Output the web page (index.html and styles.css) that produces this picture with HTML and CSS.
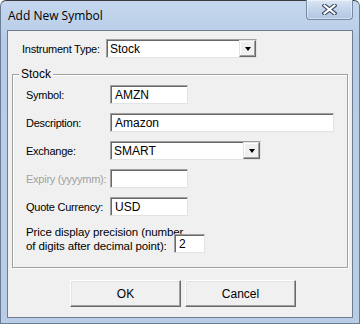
FILE: index.html
```html
<!DOCTYPE html>
<html lang="en">
<head>
  <meta charset="UTF-8">
  <meta name="viewport" content="width=device-width, initial-scale=1.0">
  <title>Add New Symbol</title>
  <link rel="stylesheet" href="styles.css">
</head>
<body>

<div class="window">
  <div class="titlebar">
    <span class="title">Add New Symbol</span>
    <button class="close" type="button" aria-label="Close">
      <svg width="15" height="11" viewBox="0 0 15 11">
        <path d="M2.5 1.5 L12.5 9.5 M12.5 1.5 L2.5 9.5" stroke="#3a4a66" stroke-width="4.2" stroke-linecap="square"/>
        <path d="M2.5 1.5 L12.5 9.5 M12.5 1.5 L2.5 9.5" stroke="#fff" stroke-width="2" stroke-linecap="square"/>
      </svg>
    </button>
  </div>

  <div class="client">
    <div class="row top-row">
      <label class="lbl">Instrument Type:</label>
      <div class="combo w-type">
        <span class="combo-text">Stock</span>
        <span class="combo-btn"><i class="arrow"></i></span>
      </div>
    </div>

    <div class="group">
      <span class="legend">Stock</span>

      <div class="row first">
        <label class="lbl">Symbol:</label>
        <div class="edit w-short">AMZN</div>
      </div>
      <div class="row">
        <label class="lbl">Description:</label>
        <div class="edit w-long">Amazon</div>
      </div>
      <div class="row">
        <label class="lbl">Exchange:</label>
        <div class="combo w-exch">
          <span class="combo-text">SMART</span>
          <span class="combo-btn"><i class="arrow"></i></span>
        </div>
      </div>
      <div class="row">
        <label class="lbl disabled">Expiry (yyyymm):</label>
        <div class="edit w-short"></div>
      </div>
      <div class="row">
        <label class="lbl">Quote Currency:</label>
        <div class="edit w-short">USD</div>
      </div>
      <div class="row precision">
        <label class="lbl-wide">Price display precision (number<br>of digits after decimal point):</label>
        <div class="edit w-tiny">2</div>
      </div>
    </div>

    <div class="buttons">
      <button class="btn" type="button">OK</button>
      <button class="btn" type="button">Cancel</button>
    </div>
  </div>
</div>

</body>
</html>
```

FILE: styles.css
```css
body { margin: 0; background: #fff; font-family: "Liberation Sans", Arial, sans-serif; font-size: 11px; color: #000; }

.window { width: 360px; height: 324px; box-sizing: border-box; border: 1px solid #6b7d96; border-top-color: #3b3b3b; border-radius: 6px 6px 0 0; background: linear-gradient(#c4d7ee, #b7cce6 40px, #b9cde6); }
.titlebar { height: 29px; display: flex; justify-content: space-between; align-items: flex-start; }
.title { font-family: "Open Sans", "Noto Sans", sans-serif; font-size: 12px; padding: 6px 0 0 7px; color: #000; }
.close { width: 47px; height: 20px; margin: -1px 6px 0 0; padding: 0; border: 1px solid #7588a4; border-top: none; border-radius: 0 0 4px 4px; background: linear-gradient(#dbe6f4, #c3d4ea 50%, #b2c6e2); display: flex; align-items: center; justify-content: center; box-shadow: inset 0 0 0 1px rgba(255,255,255,.45); }

.client { height: 288px; margin: 0 6px; box-sizing: border-box; border: 1px solid #6d7c91; background: #f0f0f0; }

.row { display: flex; align-items: center; height: 19px; margin-top: 9px; }
.row.first { margin-top: 0; }
.top-row { margin-top: 8px; padding-left: 14px; }
.lbl { width: 84px; flex: none; white-space: nowrap; letter-spacing: -0.25px; }
.lbl.disabled { color: #a0a0a0; }

.edit, .combo { height: 19px; box-sizing: border-box; background: #fff; border: 1px solid; border-color: #a0a0a0 #e3e3e3 #e3e3e3 #a0a0a0; box-shadow: inset 1px 1px #696969; }
.edit { padding: 2px 0 0 4px; line-height: 14px; font-size: 12px; }
.w-short { width: 78px; }
.w-long { width: 224px; }
.w-tiny { width: 31px; }
.w-type { width: 151px; }
.w-exch { width: 151px; }

.combo { display: flex; justify-content: space-between; }
.combo-text { padding: 2px 0 0 3px; font-size: 12px; line-height: 14px; }
.combo-btn { width: 17px; height: 17px; box-sizing: border-box; background: #f0f0f0; border: 1px solid; border-color: #e3e3e3 #696969 #696969 #e3e3e3; box-shadow: inset -1px -1px #a0a0a0, inset 1px 1px #fff; display: flex; align-items: center; justify-content: center; }
.arrow { width: 0; height: 0; border-left: 3.5px solid transparent; border-right: 3.5px solid transparent; border-top: 4px solid #000; margin-top: 1px; }

.group { position: relative; margin: 16px 4px 0; padding: 10px 0 13px 13px; border: 1px solid #a0a0a0; box-shadow: inset 1px 1px #fff, 1px 1px #fff; height: 194px; box-sizing: border-box; }
.legend { position: absolute; left: 6px; top: -7px; padding: 0 2px; background: #f0f0f0; font-size: 12px; line-height: 13px; }
.precision { height: 28px; align-items: flex-end; }
.lbl-wide { width: 148px; flex: none; line-height: 14px; white-space: nowrap; align-self: flex-start; font-size: 11.5px; letter-spacing: -0.1px; }

.buttons { display: flex; gap: 4px; padding-left: 62px; margin-top: 12px; }
.btn { width: 111px; height: 27px; box-sizing: border-box; padding: 0; font-family: "Liberation Sans", Arial, sans-serif; font-size: 12px; background: #f0f0f0; border: 1px solid; border-color: #fff #696969 #696969 #fff; box-shadow: inset -1px -1px #a0a0a0, inset 1px 1px #e3e3e3; color: #000; }
```
